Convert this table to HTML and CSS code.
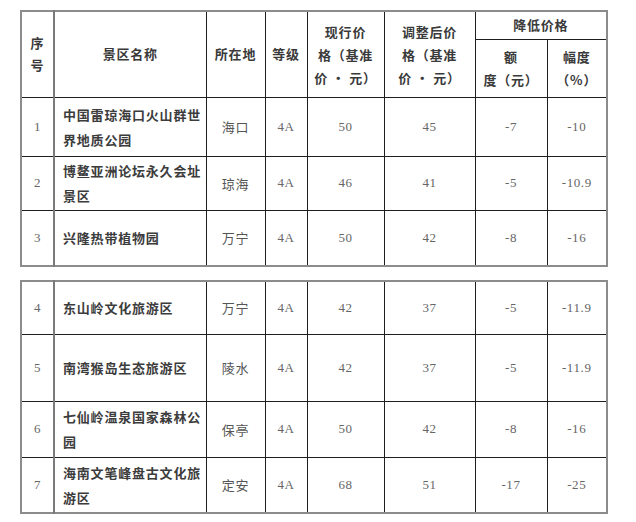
FILE: index.html
```html
<!DOCTYPE html>
<html lang="zh-CN">
<head>
<meta charset="utf-8">
<title>景区门票价格调整表</title>
<link rel="stylesheet" href="styles.css">
</head>
<body>
<div class="page">
  <table class="grid">
    <colgroup>
      <col class="c-no"><col class="c-name"><col class="c-loc"><col class="c-lvl">
      <col class="c-cur"><col class="c-adj"><col class="c-amt"><col class="c-pct">
    </colgroup>
    <tr class="h1">
      <th rowspan="2" class="no-col">序<br>号</th>
      <th rowspan="2">景区名称</th>
      <th rowspan="2">所在地</th>
      <th rowspan="2">等级</th>
      <th rowspan="2" class="ml">现行价<br>格（基准<br>价 · 元）</th>
      <th rowspan="2" class="ml">调整后价<br>格（基准<br>价 · 元）</th>
      <th colspan="2">降低价格</th>
    </tr>
    <tr class="h2">
      <th class="ml">额<br>度（元）</th>
      <th class="ml">幅度<br>（%）</th>
    </tr>
    <tr class="r59">
      <td class="num no-col">1</td><td class="name">中国雷琼海口火山群世<br>界地质公园</td><td class="loc">海口</td><td class="num">4A</td>
      <td class="num">50</td><td class="num">45</td><td class="num">-7</td><td class="num">-10</td>
    </tr>
    <tr class="r54">
      <td class="num no-col">2</td><td class="name">博鳌亚洲论坛永久会址<br>景区</td><td class="loc">琼海</td><td class="num">4A</td>
      <td class="num">46</td><td class="num">41</td><td class="num">-5</td><td class="num">-10.9</td>
    </tr>
    <tr class="r56">
      <td class="num no-col">3</td><td class="name">兴隆热带植物园</td><td class="loc">万宁</td><td class="num">4A</td>
      <td class="num">50</td><td class="num">42</td><td class="num">-8</td><td class="num">-16</td>
    </tr>
  </table>

  <table class="grid second">
    <colgroup>
      <col class="c-no"><col class="c-name"><col class="c-loc"><col class="c-lvl">
      <col class="c-cur"><col class="c-adj"><col class="c-amt"><col class="c-pct">
    </colgroup>
    <tr class="r53">
      <td class="num no-col">4</td><td class="name">东山岭文化旅游区</td><td class="loc">万宁</td><td class="num">4A</td>
      <td class="num">42</td><td class="num">37</td><td class="num">-5</td><td class="num">-11.9</td>
    </tr>
    <tr class="r67">
      <td class="num no-col">5</td><td class="name">南湾猴岛生态旅游区</td><td class="loc">陵水</td><td class="num">4A</td>
      <td class="num">42</td><td class="num">37</td><td class="num">-5</td><td class="num">-11.9</td>
    </tr>
    <tr class="r56">
      <td class="num no-col">6</td><td class="name">七仙岭温泉国家森林公<br>园</td><td class="loc">保亭</td><td class="num">4A</td>
      <td class="num">50</td><td class="num">42</td><td class="num">-8</td><td class="num">-16</td>
    </tr>
    <tr class="r56">
      <td class="num no-col">7</td><td class="name">海南文笔峰盘古文化旅<br>游区</td><td class="loc">定安</td><td class="num">4A</td>
      <td class="num">68</td><td class="num">51</td><td class="num">-17</td><td class="num">-25</td>
    </tr>
  </table>
</div>
</body>
</html>
```

FILE: styles.css
```css
html, body {
  margin: 0;
  padding: 0;
  background: #ffffff;
}

.page {
  padding: 10px 0 0 20px;
  font-family: "Noto Sans CJK SC", "Noto Sans", sans-serif;
}

.grid {
  border-collapse: collapse;
  table-layout: fixed;
  width: 587px;
  border: 2px solid #8c8c8c;
}

.second {
  margin-top: 13px;
}

.c-no { width: 33px; }
.c-name { width: 152px; }
.c-loc { width: 59px; }
.c-lvl { width: 42px; }
.c-cur { width: 77px; }
.c-adj { width: 91px; }
.c-amt { width: 72px; }
.c-pct { width: 60px; }

.grid th,
.grid td {
  border: 1px solid #1e1e1e;
  padding: 0;
  text-align: center;
  vertical-align: middle;
}

.grid th.no-col,
.grid td.no-col {
  border-right: 2px solid #7a7a7a;
}

.grid th {
  font-size: 13px;
  font-weight: 700;
  color: #3a3a3a;
  letter-spacing: 0.8px;
  line-height: 22px;
}

.grid th.ml {
  line-height: 23px;
}

.h1 { height: 28px; }
.h2 { height: 58px; }
.r53 { height: 53px; }
.r54 { height: 54px; }
.r56 { height: 56px; }
.r59 { height: 59px; }
.r67 { height: 67px; }

.name {
  text-align: left !important;
  padding-left: 8px !important;
  font-size: 13px;
  font-weight: 700;
  color: #3c3c3c;
  letter-spacing: 0.8px;
  line-height: 25px;
}

.loc {
  font-size: 13px;
  color: #555555;
  letter-spacing: 0.8px;
}

.num {
  font-family: "Liberation Serif", "Noto Sans CJK SC", serif;
  font-size: 13px;
  color: #666666;
  letter-spacing: 0.6px;
}
```
